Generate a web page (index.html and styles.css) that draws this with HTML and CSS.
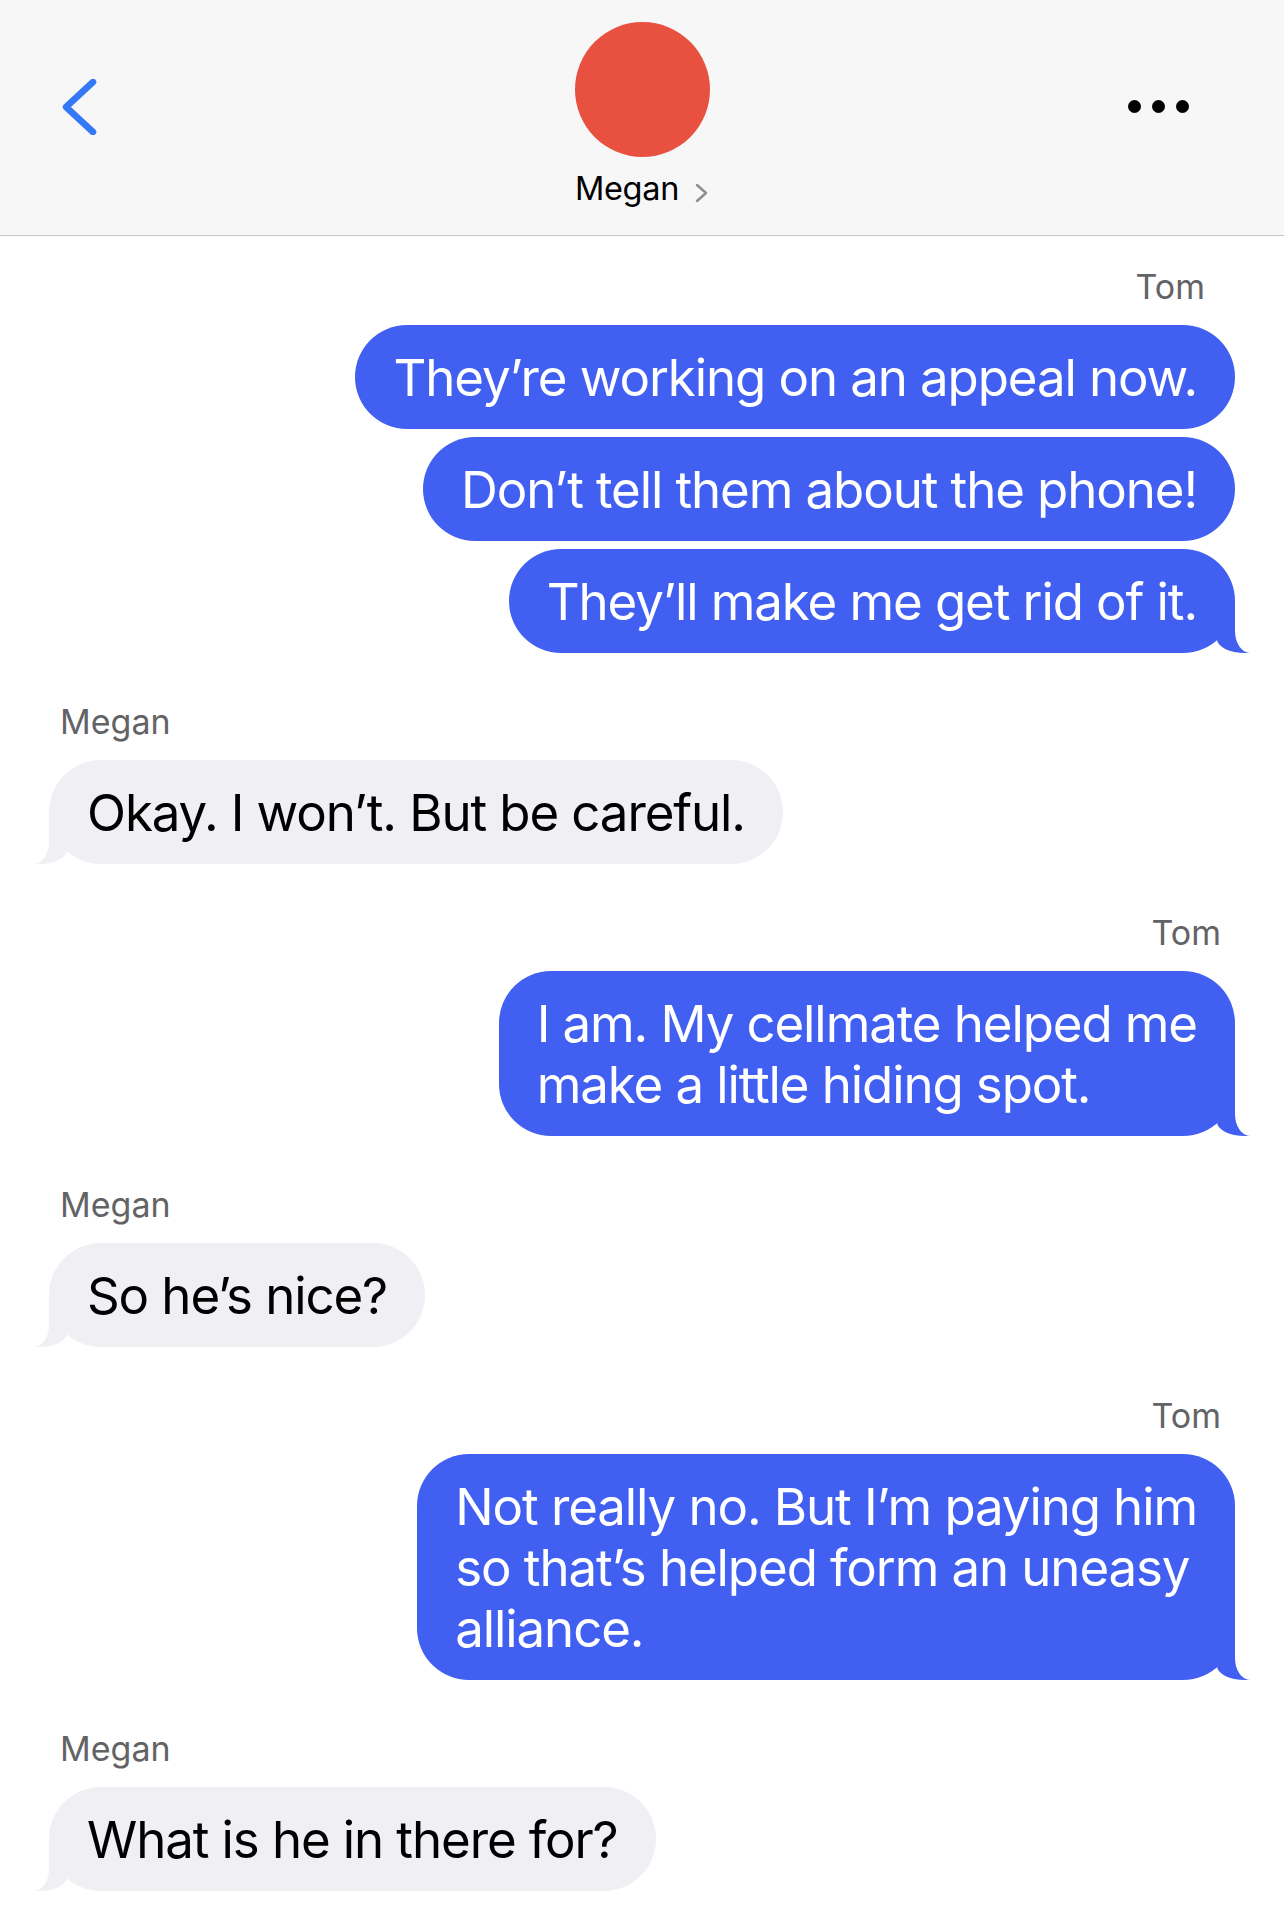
FILE: index.html
```html
<!DOCTYPE html>
<html lang="en">
<head>
    <meta charset="UTF-8">
    <meta name="viewport" content="width=device-width, initial-scale=1.0">
    <title>Megan</title>
    <link rel="stylesheet" href="styles.css">
</head>
<body>
    <header class="top-bar">
        <div class="back">
            <svg width="36" height="56" viewBox="0 0 36 56">
                <polyline points="32,3 5,28 32,53" fill="none" stroke="#3478f6" stroke-width="6.5" stroke-linecap="round" stroke-linejoin="round"/>
            </svg>
        </div>
        <div class="contact">
            <div class="avatar"></div>
            <div class="contact-name">
                <span>Megan</span>
                <svg class="name-chevron" width="14" height="20" viewBox="0 0 14 20">
                    <polyline points="2,2 11,10 2,18" fill="none" stroke="#8e8e93" stroke-width="2.5" stroke-linecap="round" stroke-linejoin="round"/>
                </svg>
            </div>
        </div>
        <div class="more">
            <span class="dot"></span>
            <span class="dot"></span>
            <span class="dot"></span>
        </div>
    </header>

    <main class="chat">
        <div class="group sent">
            <div class="sender first">Tom</div>
            <div class="bubble">They’re working on an appeal now.</div>
            <div class="bubble">Don’t tell them about the phone!</div>
            <div class="bubble tail">They’ll make me get rid of it.</div>
        </div>

        <div class="group received">
            <div class="sender">Megan</div>
            <div class="bubble tail">Okay. I won’t. But be careful.</div>
        </div>

        <div class="group sent">
            <div class="sender">Tom</div>
            <div class="bubble tail">I am. My cellmate helped me<br>make a little hiding spot.</div>
        </div>

        <div class="group received">
            <div class="sender">Megan</div>
            <div class="bubble tail">So he’s nice?</div>
        </div>

        <div class="group sent">
            <div class="sender">Tom</div>
            <div class="bubble tail">Not really no. But I’m paying him<br>so that’s helped form an uneasy<br>alliance.</div>
        </div>

        <div class="group received">
            <div class="sender">Megan</div>
            <div class="bubble tail">What is he in there for?</div>
        </div>
    </main>
</body>
</html>
```

FILE: styles.css
```css
body {
    font-family: 'Inter', 'Noto Sans', sans-serif;
    background-color: #fff;
    color: #000;
    margin: 0;
    padding: 0;
}

/* header */
.top-bar {
    display: grid;
    grid-template-columns: 1fr auto 1fr;
    align-items: start;
    padding: 22px 0 26px;
    background-color: #f7f7f7;
    border-bottom: 1px solid #c6c6c8;
}
.back {
    padding: 57px 0 0 61px;
}
.back svg {
    display: block;
}
.contact {
    display: flex;
    flex-direction: column;
    align-items: center;
}
.avatar {
    width: 135px;
    height: 135px;
    border-radius: 50%;
    background-color: #e8513f;
}
.contact-name {
    display: flex;
    align-items: center;
    gap: 16px;
    margin-top: 12px;
    font-size: 32.5px;
    line-height: 40px;
    letter-spacing: -0.3px;
}
.name-chevron {
    margin-top: 8px;
}
.more {
    justify-self: end;
    display: flex;
    gap: 11px;
    padding: 78px 95px 0 0;
}
.dot {
    width: 13px;
    height: 13px;
    border-radius: 50%;
    background-color: #000;
}

/* messages */
.chat {
    padding: 31px 49px 0;
}
.group {
    display: flex;
    flex-direction: column;
    gap: 8px;
}
.group + .group {
    margin-top: 49px;
}
.sent {
    align-items: flex-end;
}
.received {
    align-items: flex-start;
}
.sender {
    font-size: 34px;
    line-height: 40px;
    color: #636366;
    margin-bottom: 10px;
    padding: 0 14px 0 11px;
}
.sender.first {
    padding-right: 30px;
}
.bubble {
    position: relative;
    padding: 21.5px 38px;
    border-radius: 52px;
    font-size: 51px;
    line-height: 61px;
    letter-spacing: -1.1px;
    white-space: nowrap;
}
.sent .bubble {
    background-color: #4160f2;
    color: #fff;
}
.received .bubble {
    background-color: #efeff4;
    color: #000;
}

/* bubble tails */
.bubble.tail::before,
.bubble.tail::after {
    content: "";
    position: absolute;
    bottom: 0;
    height: 52px;
}
.sent .bubble.tail::before {
    right: -15px;
    width: 33px;
    background-color: #4160f2;
    border-bottom-left-radius: 28px 14px;
}
.sent .bubble.tail::after {
    right: -45px;
    width: 45px;
    background-color: #fff;
    border-bottom-left-radius: 15px 22px;
}
.received .bubble.tail::before {
    left: -15px;
    width: 33px;
    background-color: #efeff4;
    border-bottom-right-radius: 28px 14px;
}
.received .bubble.tail::after {
    left: -45px;
    width: 45px;
    background-color: #fff;
    border-bottom-right-radius: 15px 22px;
}
```
